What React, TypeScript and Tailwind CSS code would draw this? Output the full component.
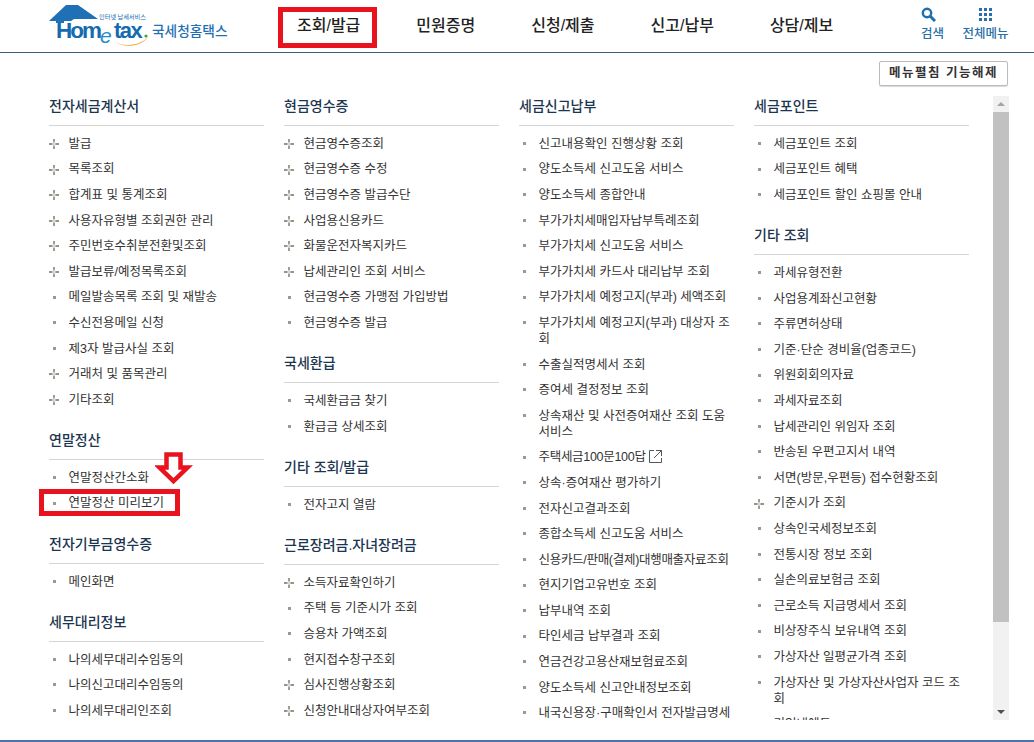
import React from 'react'

type Item = { t: string; plus?: boolean; ext?: boolean; tight?: boolean }
type Section = { title: string; items: Item[] }

const p = (t: string): Item => ({ t, plus: true })
const s = (t: string): Item => ({ t })

const columns: Section[][] = [
  [
    {
      title: '전자세금계산서',
      items: [
        p('발급'), p('목록조회'), p('합계표 및 통계조회'), p('사용자유형별 조회권한 관리'),
        p('주민번호수취분전환및조회'), p('발급보류/예정목록조회'), s('메일발송목록 조회 및 재발송'),
        s('수신전용메일 신청'), s('제3자 발급사실 조회'), p('거래처 및 품목관리'), p('기타조회'),
      ],
    },
    { title: '연말정산', items: [s('연말정산간소화'), s('연말정산 미리보기')] },
    { title: '전자기부금영수증', items: [s('메인화면')] },
    { title: '세무대리정보', items: [s('나의세무대리수임동의'), s('나의신고대리수임동의'), s('나의세무대리인조회')] },
  ],
  [
    {
      title: '현금영수증',
      items: [
        p('현금영수증조회'), p('현금영수증 수정'), p('현금영수증 발급수단'), p('사업용신용카드'),
        p('화물운전자복지카드'), p('납세관리인 조회 서비스'), s('현금영수증 가맹점 가입방법'), s('현금영수증 발급'),
      ],
    },
    { title: '국세환급', items: [s('국세환급금 찾기'), s('환급금 상세조회')] },
    { title: '기타 조회/발급', items: [s('전자고지 열람')] },
    {
      title: '근로장려금.자녀장려금',
      items: [
        p('소득자료확인하기'), s('주택 등 기준시가 조회'), s('승용차 가액조회'), s('현지접수창구조회'),
        p('심사진행상황조회'), p('신청안내대상자여부조회'),
      ],
    },
  ],
  [
    {
      title: '세금신고납부',
      items: [
        s('신고내용확인 진행상황 조회'), s('양도소득세 신고도움 서비스'), s('양도소득세 종합안내'),
        s('부가가치세매입자납부특례조회'), s('부가가치세 신고도움 서비스'), s('부가가치세 카드사 대리납부 조회'),
        s('부가가치세 예정고지(부과) 세액조회'), s('부가가치세 예정고지(부과) 대상자 조회'), s('수출실적명세서 조회'),
        s('증여세 결정정보 조회'), s('상속재산 및 사전증여재산 조회 도움 서비스'),
        { t: '주택세금100문100답', ext: true, tight: true }, s('상속·증여재산 평가하기'), s('전자신고결과조회'),
        s('종합소득세 신고도움 서비스'), { t: '신용카드/판매(결제)대행매출자료조회', tight: true }, s('현지기업고유번호 조회'),
        s('납부내역 조회'), s('타인세금 납부결과 조회'), s('연금건강고용산재보험료조회'),
        s('양도소득세 신고안내정보조회'), s('내국신용장·구매확인서 전자발급명세'),
      ],
    },
  ],
  [
    { title: '세금포인트', items: [s('세금포인트 조회'), s('세금포인트 혜택'), s('세금포인트 할인 쇼핑몰 안내')] },
    {
      title: '기타 조회',
      items: [
        s('과세유형전환'), s('사업용계좌신고현황'), s('주류면허상태'), s('기준·단순 경비율(업종코드)'),
        s('위원회회의자료'), s('과세자료조회'), s('납세관리인 위임자 조회'), s('반송된 우편고지서 내역'),
        s('서면(방문,우편등) 접수현황조회'), p('기준시가 조회'), s('상속인국세정보조회'), s('전통시장 정보 조회'),
        s('실손의료보험금 조회'), s('근로소득 지급명세서 조회'), s('비상장주식 보유내역 조회'),
        s('가상자산 일평균가격 조회'), s('가상자산 및 가상자산사업자 코드 조회'), s('기업내에듀'),
      ],
    },
  ],
]

const navItems = ['조회/발급', '민원증명', '신청/제출', '신고/납부', '상담/제보']

function PlusBullet() {
  return (
    <svg width="10" height="10" viewBox="0 0 10 10" className="absolute left-0 top-[8px]">
      <path d="M5 0v3.6M5 6.4V10M0 5h3.6M6.4 5H10" stroke="#94948a" strokeWidth="1.8" fill="none" />
      <path d="M4 4h2v2H4z" fill="#d8d8d4" />
    </svg>
  )
}

function MenuItem({ item }: { item: Item }) {
  return (
    <li
      className={`relative py-[4.8px] pl-[19.5px] pr-[3.5px] text-[12.5px] leading-[16px] text-[#333] ${
        item.tight ? 'whitespace-nowrap tracking-[-0.3px]' : ''
      }`}
    >
      {item.plus ? <PlusBullet /> : <span className="absolute left-[4px] top-[11px] h-[3px] w-[3px] bg-[#999]" />}
      {item.t}
      {item.ext && (
        <svg width="13" height="13" viewBox="0 0 13 13" className="ml-[3px] inline-block align-[-2px]">
          <path d="M5 .5H.5v12h12V8M7 .5h5.5V6M12.5 .5L5 8" stroke="#555" fill="none" />
        </svg>
      )}
    </li>
  )
}

function MenuSection({ section }: { section: Section }) {
  return (
    <section className="mb-[17.5px]">
      <h3 className="border-b border-[#d5d5d5] pb-[9px] text-[14px] leading-[20px] font-medium text-[#1c3550]">
        {section.title}
      </h3>
      <ul className="mt-[5px]">
        {section.items.map((item) => (
          <MenuItem key={item.t} item={item} />
        ))}
      </ul>
    </section>
  )
}

// viewBox uses page coordinates so the logo parts line up with the capture
function Logo() {
  return (
    <svg width="182" height="52" viewBox="48 0 182 52">
      <path d="M49 21L66 5h12l20 14h-24l-3 2H64v2h-8v-2z" fill="#1f70b5" />
      <path d="M114 41c8 6 24 6 34 -4c-8 11 -26 11 -34 4z" fill="#f0a030" />
      <text x="56" y="38" fontFamily="Liberation Sans, sans-serif" fontWeight="700" fontSize="22.5" fill="#146bb0" letterSpacing="-2">Hom</text>
      <text x="100" y="43" fontFamily="Liberation Sans, sans-serif" fontStyle="italic" fontSize="21" fill="#2a8ac8">e</text>
      <text x="114" y="38" fontFamily="Liberation Sans, sans-serif" fontWeight="700" fontSize="22" fill="#146bb0" letterSpacing="-1.5">tax</text>
      <circle cx="146" cy="36" r="1.6" fill="#4f9e38" />
      <text x="99" y="19" fontFamily="Noto Sans CJK KR, sans-serif" fontSize="6.2" fill="#146bb0">인터넷 납세서비스</text>
      <text x="152" y="36" fontFamily="Noto Sans CJK KR, sans-serif" fontWeight="500" fontSize="13.7" fill="#1f70b5">국세청홈택스</text>
    </svg>
  )
}

export default function App() {
  return (
    <div className="relative h-[742px] w-[1034px] overflow-hidden bg-white font-['Liberation_Sans','Noto_Sans_CJK_KR',sans-serif]">
      <header className="flex h-[53px] items-start border-b border-[#3d5d85]">
        <div className="ml-[48px] w-[182px] shrink-0">
          <Logo />
        </div>
        <nav className="ml-[67px] flex h-[52px] items-center gap-[56px] text-[16px] font-medium text-[#222]">
          {navItems.map((n) => (
            <span key={n}>{n}</span>
          ))}
        </nav>
        <div className="ml-auto mr-[25px] mt-[7px] flex gap-[16px] text-[12.5px] font-medium text-[#2a6fa8]">
          <div className="flex w-[27px] flex-col items-center">
            <svg width="15" height="15" viewBox="0 0 15 15" className="mb-[3px] -translate-x-[4px]">
              <circle cx="6" cy="6" r="4.2" stroke="#1c6fb0" strokeWidth="2.4" fill="none" />
              <path d="M9 9l5 5" stroke="#1c6fb0" strokeWidth="3" />
            </svg>
            <span className="leading-[18px] whitespace-nowrap">검색</span>
          </div>
          <div className="flex w-[47px] flex-col items-center">
            <div className="mb-[4px] mt-[1px] grid h-[13px] w-[13px] grid-cols-3 gap-[2px]">
              {Array.from({ length: 9 }).map((_, i) => (
                <span key={i} className="bg-[#2a6fa8]" />
              ))}
            </div>
            <span className="leading-[18px] whitespace-nowrap">전체메뉴</span>
          </div>
        </div>
      </header>

      <div className="flex justify-end pr-[26px] pt-[8px]">
        <button className="h-[25px] w-[129px] rounded-[2px] border border-[#bbb] bg-white text-[12.5px] font-bold tracking-[1.5px] text-[#333] shadow-[0_1px_1px_rgba(0,0,0,0.15)]">
          메뉴펼침 기능해제
        </button>
      </div>

      <div className="ml-[49px] mt-[10px] flex h-[624px] w-[960px]">
        <div className="flex h-full flex-1 gap-5 overflow-hidden">
          {columns.map((col, i) => (
            <div key={i} className="w-[215px] shrink-0">
              {col.map((section) => (
                <MenuSection key={section.title} section={section} />
              ))}
            </div>
          ))}
        </div>
        <div className="flex h-full w-[16px] shrink-0 flex-col bg-[#f1f1f1]">
          <div className="flex h-[16px] items-center justify-center">
            <span className="h-0 w-0 border-x-[4px] border-b-[4px] border-x-transparent border-b-[#a3a3a3]" />
          </div>
          <div className="h-[510px] bg-[#c1c1c1]" />
          <div className="flex-1" />
          <div className="flex h-[16px] items-center justify-center">
            <span className="h-0 w-0 border-x-[4px] border-t-[4px] border-x-transparent border-t-[#505050]" />
          </div>
        </div>
      </div>

      <div className="absolute inset-x-0 bottom-0 h-[2px] bg-[#4a74a8]" />

      {/* red annotations drawn over the capture */}
      <div className="absolute left-[278px] top-[7px] h-[41px] w-[99px] border-[5px] border-[#e8131f]" />
      <div className="absolute left-[39px] top-[489px] h-[27px] w-[141px] border-[5px] border-[#e8131f]" />
      <svg width="38" height="34" viewBox="0 0 38 34" className="absolute left-[155px] top-[451px]">
        <path d="M11.5 3.5h14v13h7L18.5 30 4.5 16.5h7z" fill="#fff" stroke="#e8131f" strokeWidth="4.5" />
      </svg>
    </div>
  )
}
